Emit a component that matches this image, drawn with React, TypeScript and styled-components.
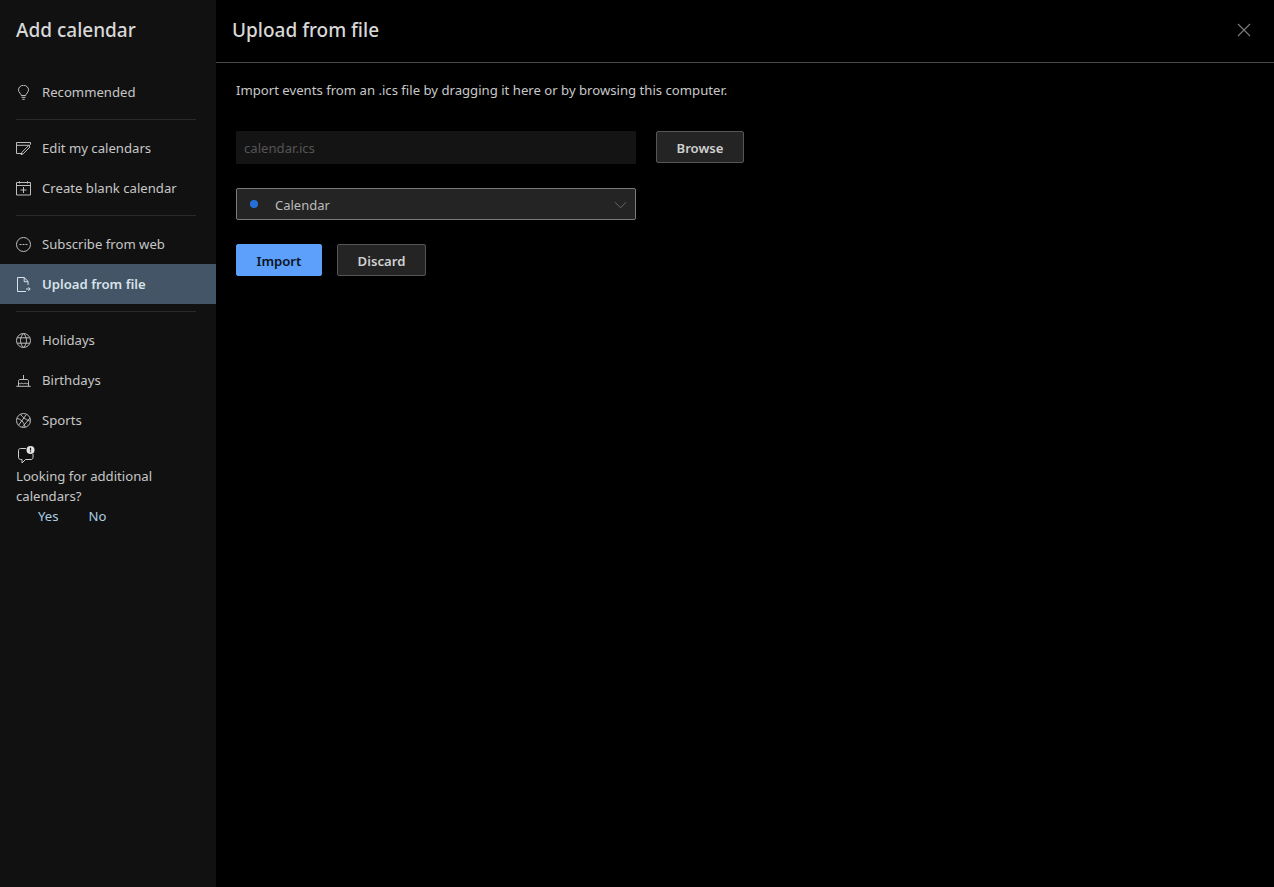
import { createGlobalStyle, styled } from 'styled-components';
import { ReactNode } from 'react';

const GlobalStyle = createGlobalStyle`
    html, body {
        margin: 0;
        height: 100%;
        background: #000;
    }
    body {
        font-family: "Noto Sans", "Open Sans", sans-serif;
        font-size: 13px;
        color: #d6d6d6;
    }
    * {
        box-sizing: border-box;
    }
`;

const Page = styled.div`
    display: flex;
    width: 1274px;
    height: 887px;
    overflow: hidden;
`;

const Sidebar = styled.aside`
    width: 216px;
    flex: none;
    background: #111111;
    display: flex;
    flex-direction: column;
`;

const SidebarTitle = styled.h1`
    margin: 0;
    height: 72px;
    padding: 15px 16px 0;
    font-size: 19px;
    line-height: 30px;
    font-weight: 500;
    color: #d8d8d8;
`;

const NavRow = styled.div<{ $active?: boolean }>`
    height: 40px;
    display: flex;
    align-items: center;
    gap: 11px;
    padding-left: 16px;
    font-size: 13.15px;
    font-weight: ${props => (props.$active ? 600 : 400)};
    color: ${props => (props.$active ? '#d8e2ea' : '#c6c6c6')};
    background: ${props => (props.$active ? '#435566' : 'transparent')};

    svg {
        width: 15px;
        height: 15px;
        flex: none;
        fill: none;
        stroke: ${props => (props.$active ? '#dbe3ea' : '#bdbdbd')};
        stroke-width: 1;
    }
`;

const NavDivider = styled.hr`
    height: 1px;
    margin: 7px 20px 8px 16px;
    border: 0;
    background: #2a2a2a;
`;

const Feedback = styled.div`
    padding: 5px 16px 0;
    font-size: 13.15px;
    line-height: 20px;
    color: #c6c6c6;

    svg {
        display: block;
        width: 20px;
        height: 20px;
        margin-bottom: 1px;
    }
`;

const FeedbackLinks = styled.div`
    display: flex;
    gap: 30px;
    padding-left: 22px;
    color: #a9cfe8;
`;

const Main = styled.main`
    flex: 1;
    background: #000;
    min-width: 0;
`;

const MainHeader = styled.header`
    height: 63px;
    display: flex;
    align-items: center;
    justify-content: space-between;
    padding: 0 23px 2px 16px;
    border-bottom: 1px solid #4a4a4a;
`;

const MainTitle = styled.h2`
    margin: 0;
    font-size: 19px;
    font-weight: 500;
    color: #d8d8d8;
`;

const CloseIcon = styled.svg`
    width: 14px;
    height: 14px;
    stroke: #7c7c7c;
    stroke-width: 1.1;
    fill: none;
`;

const Content = styled.div`
    padding: 17px 20px;
    display: flex;
    flex-direction: column;
    align-items: flex-start;
`;

const Intro = styled.p`
    margin: 0 0 31px;
    font-size: 13.15px;
    line-height: 20px;
    color: #c8c8c8;
`;

const FileRow = styled.div`
    display: flex;
    align-items: flex-start;
    gap: 20px;
    margin-bottom: 24px;
`;

const FileField = styled.div`
    width: 400px;
    height: 33px;
    padding-left: 8px;
    display: flex;
    align-items: center;
    background: #141414;
    color: #545454;
    font-size: 13.15px;
`;

const Button = styled.button<{ $primary?: boolean }>`
    height: 32px;
    padding: 2px 0 0;
    border-radius: 2px;
    border: 1px solid ${props => (props.$primary ? '#5ca0fb' : '#565656')};
    background: ${props => (props.$primary ? '#5ca0fb' : '#242424')};
    color: ${props => (props.$primary ? '#0b1320' : '#d0d0d0')};
    font-family: inherit;
    font-size: 13.15px;
    font-weight: 600;
`;

const BrowseButton = styled(Button)`
    width: 88px;
`;

const ImportButton = styled(Button)`
    width: 86px;
`;

const DiscardButton = styled(Button)`
    width: 89px;
`;

const CalendarSelect = styled.div`
    width: 400px;
    height: 32px;
    margin-bottom: 24px;
    padding: 2px 8px 0 13px;
    display: flex;
    align-items: center;
    border: 1px solid #7c7c7c;
    border-radius: 2px;
    background: #242424;
    color: #bcbcbc;
    font-size: 13px;

    svg {
        margin: -2px 0 0 auto;
        width: 13px;
        height: 13px;
        stroke: #6e6e6e;
        fill: none;
    }
`;

const CalendarDot = styled.span`
    width: 8px;
    height: 8px;
    margin: -2px 17px 0 0;
    border-radius: 50%;
    background: #2470d8;
`;

const Actions = styled.div`
    display: flex;
    gap: 15px;
`;

const icons: Record<string, ReactNode> = {
    bulb: (
        <svg viewBox="0 0 15 15">
            <path d="M5.300 10.500c0-1.800-2.800-2.800-2.800-5.700a5 4.500 0 0 1 10 0c0 2.900-2.800 3.900-2.800 5.700zM5.500 12.300h4M6.300 14.300h2.400" />
        </svg>
    ),
    edit: (
        <svg viewBox="0 0 15 15">
            <path d="M6.500 12.500H.5V1.500h14v2.200M.5 4.300h13.500M14 6l-6.800 6.800-2.200.9.700-2.200L12.500 4.700z" />
        </svg>
    ),
    add: (
        <svg viewBox="0 0 15 15">
            <path d="M.5 1.500h14v12.500H.5zM.5 4.500h14M3.500.2v2.300M11.500.2v2.300M7.500 6v6M4.500 9h6" />
        </svg>
    ),
    web: (
        <svg viewBox="0 0 15 15">
            <path d="M.5 7.500a7 7 0 1 0 14 0 7 7 0 1 0-14 0M3.500 7.500h2M6.500 7.500h2M9.500 7.500h2" />
        </svg>
    ),
    file: (
        <svg viewBox="0 0 15 15">
            <path d="M12 8V4.500L8.300.5H1.500v14H10M8.200.5v4.200H12M10 12h4M12.500 10.300l1.700 1.700-1.700 1.700" />
        </svg>
    ),
    globe: (
        <svg viewBox="0 0 15 15">
            <path d="M.5 7.500a7 7 0 1 0 14 0 7 7 0 1 0-14 0M7.500.5c-4 3.900-4 10.100 0 14M7.500.5c4 3.900 4 10.100 0 14M1.300 4.800h12.400M1.300 10.200h12.400" />
        </svg>
    ),
    cake: (
        <svg viewBox="0 0 15 15">
            <path d="M7.500 2v4M2.500 13V8.500C2.500 7 3 6.500 4 6.500h7c1 0 1.500.5 1.500 2V13M2.500 10c1.300 1 2.300 1 3.400 0 1.100 1 2.100 1 3.200 0 1.100 1 2.100 1 3.400 0M.3 13.300h14.400" />
        </svg>
    ),
    sports: (
        <svg viewBox="0 0 15 15">
            <path d="M.5 7.500a7 7 0 1 0 14 0 7 7 0 1 0-14 0M4.500 1.300c2.200 2.800 4.300 5 9.300 6.700M1 5.500c3.700.5 7 3.300 8 8.500M10.500 1.300 2.500 12.300M14 5 6.500 14" />
        </svg>
    ),
};

function NavItem({ icon, label, active }: { icon: string; label: string; active?: boolean }) {
    return (
        <NavRow $active={active}>
            {icons[icon]}
            <span>{label}</span>
        </NavRow>
    );
}

export default function App() {
    return (
        <Page>
            <GlobalStyle />
            <Sidebar>
                <SidebarTitle>Add calendar</SidebarTitle>
                <NavItem icon="bulb" label="Recommended" />
                <NavDivider />
                <NavItem icon="edit" label="Edit my calendars" />
                <NavItem icon="add" label="Create blank calendar" />
                <NavDivider />
                <NavItem icon="web" label="Subscribe from web" />
                <NavItem icon="file" label="Upload from file" active />
                <NavDivider />
                <NavItem icon="globe" label="Holidays" />
                <NavItem icon="cake" label="Birthdays" />
                <NavItem icon="sports" label="Sports" />
                <Feedback>
                    <svg viewBox="0 0 20 20">
                        <path d="M10 3.500H4.500C3.400 3.500 2.500 4.400 2.500 5.500v7c0 1.100.9 2 2 2h1.500v3.500l3.500-3.500h5.500c1.100 0 2-.9 2-2v-3.500" fill="none" stroke="#cfcfcf" />
                        <circle cx="14.500" cy="5" r="4" fill="#e4e4e4" />
                        <path d="M14.500 2.700v2.800M14.500 6.300v.9" stroke="#111111" strokeWidth="1.200" />
                    </svg>
                    Looking for additional calendars?
                    <FeedbackLinks>
                        <span>Yes</span>
                        <span>No</span>
                    </FeedbackLinks>
                </Feedback>
            </Sidebar>
            <Main>
                <MainHeader>
                    <MainTitle>Upload from file</MainTitle>
                    <CloseIcon viewBox="0 0 14 14">
                        <path d="M1 1l12 12M13 1 1 13" />
                    </CloseIcon>
                </MainHeader>
                <Content>
                    <Intro>Import events from an .ics file by dragging it here or by browsing this computer.</Intro>
                    <FileRow>
                        <FileField>calendar.ics</FileField>
                        <BrowseButton>Browse</BrowseButton>
                    </FileRow>
                    <CalendarSelect>
                        <CalendarDot />
                        Calendar
                        <svg viewBox="0 0 14 14">
                            <path d="M1 4.500l6 6 6-6" />
                        </svg>
                    </CalendarSelect>
                    <Actions>
                        <ImportButton $primary>Import</ImportButton>
                        <DiscardButton>Discard</DiscardButton>
                    </Actions>
                </Content>
            </Main>
        </Page>
    );
}
